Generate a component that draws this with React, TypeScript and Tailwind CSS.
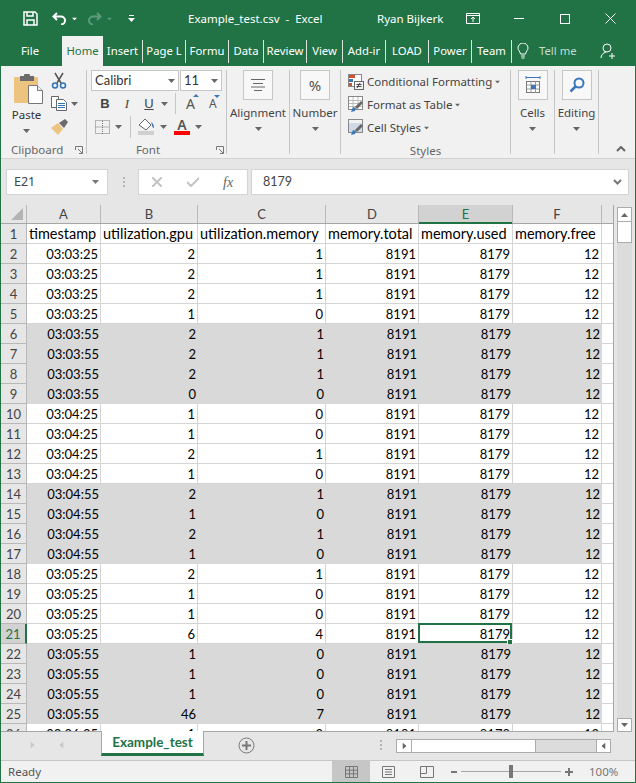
import type { ReactNode } from "react";

const uiFont = "font-['Noto_Sans',sans-serif]";
const cellFont = "font-['Lato',sans-serif]";

const tabs: [string, string][] = [
  ["Insert", "w-[40px]"],
  ["Page L", "w-[43px]"],
  ["Formu", "w-[43px]"],
  ["Data", "w-[35px]"],
  ["Review", "w-[43px]"],
  ["View", "w-[36px]"],
  ["Add-ir", "w-[43px]"],
  ["LOAD", "w-[43px]"],
  ["Power", "w-[43px]"],
  ["Team", "w-[40px]"],
];

// time, gpu, memory, shaded
const rows: [string, string, string, boolean][] = [
  ["03:03:25", "2", "1", false],
  ["03:03:25", "2", "1", false],
  ["03:03:25", "2", "1", false],
  ["03:03:25", "1", "0", false],
  ["03:03:55", "2", "1", true],
  ["03:03:55", "2", "1", true],
  ["03:03:55", "2", "1", true],
  ["03:03:55", "0", "0", true],
  ["03:04:25", "1", "0", false],
  ["03:04:25", "1", "0", false],
  ["03:04:25", "2", "1", false],
  ["03:04:25", "1", "0", false],
  ["03:04:55", "2", "1", true],
  ["03:04:55", "1", "0", true],
  ["03:04:55", "2", "1", true],
  ["03:04:55", "1", "0", true],
  ["03:05:25", "2", "1", false],
  ["03:05:25", "1", "0", false],
  ["03:05:25", "1", "0", false],
  ["03:05:25", "6", "4", false],
  ["03:05:55", "1", "0", true],
  ["03:05:55", "1", "0", true],
  ["03:05:55", "1", "0", true],
  ["03:05:55", "46", "7", true],
  ["03:06:25", "1", "0", false],
];

const widths = ["w-[74px]", "w-[97px]", "w-[128px]", "w-[93px]", "w-[94px]", "w-[89px]"];
const letters = ["A", "B", "C", "D", "E", "F"];
const headings = ["timestamp", "utilization.gpu", "utilization.memory", "memory.total", "memory.used", "memory.free"];

function Caret({ className = "", color = "#666" }: { className?: string; color?: string }) {
  return (
    <svg width="7" height="4" viewBox="0 0 7 4" className={`shrink-0 ${className}`}>
      <path d="M0 0h7L3.500 4z" fill={color} />
    </svg>
  );
}

function Launcher({ className = "" }: { className?: string }) {
  return (
    <svg width="8" height="8" viewBox="0 0 8 8" className={`shrink-0 ${className}`} fill="none" stroke="#777">
      <path d="M.5 4V.5H7.500M7.500.5V7.500H4M3 3l4 4" />
    </svg>
  );
}

function Separator({ className = "" }: { className?: string }) {
  return <span className={`w-px bg-[#c6c6c6] shrink-0 ${className}`} />;
}

function BigGroup({ label, width, children }: { label: string; width: string; children: ReactNode }) {
  return (
    <div className={`${width} flex shrink-0 items-stretch`}>
      <div className="flex-1 flex flex-col items-center pt-[4px]">
        <div className="w-[30px] h-[30px] border border-[#c6c6c6] bg-[#f8f8f8] flex items-center justify-center">
          {children}
        </div>
        <span className="mt-[4px] text-[11.500px] leading-[18px] text-[#444]">{label}</span>
        <Caret className="mt-[5px]" />
      </div>
      <Separator className="my-[4px]" />
    </div>
  );
}

function StyleRow({ icon, label, caret = true }: { icon: ReactNode; label: string; caret?: boolean }) {
  return (
    <div className="h-[23px] shrink-0 flex items-center">
      {icon}
      <span className="ml-[3px] text-[11.500px] text-[#444] whitespace-nowrap">{label}</span>
      {caret && <Caret className="ml-[2px] scale-75" />}
    </div>
  );
}

function TableIcon({ shaded }: { shaded: boolean }) {
  return (
    <svg width="16" height="17" viewBox="0 0 16 17" className="shrink-0">
      <rect x=".5" y=".5" width="14" height="13" fill={shaded ? "#cfd9e8" : "#fff"} stroke="#888" />
      {!shaded && <path d="M1 4.500h13M1 7.500h13M1 10.500h13M5 1v12M10 1v12" stroke="#bbb" />}
      {shaded && <path d="M1 1h13v3H1z" fill="#f2f2f2" />}
      <path d="M3 16l2-5 3 1-1 3z" fill="#3a76b8" />
      <path d="M7 11l6-6 2 2-6 6z" fill="#666" />
    </svg>
  );
}

function Ribbon() {
  return (
    <div className="h-[93px] shrink-0 bg-[#f1f1f1] border-b border-[#d2d2d2] flex">
      {/* clipboard */}
      <div className="w-[86px] shrink-0 flex">
        <div className="flex-1 flex flex-col">
          <div className="flex h-[76px] shrink-0">
            <div className="w-[50px] flex flex-col items-center pt-[8px] pl-[1px]">
              <svg width="30" height="30" viewBox="0 0 30 30" className="ml-[4px] shrink-0">
                <rect x="0" y="3" width="24" height="26" rx="1" fill="#edc47f" />
                <path d="M6 2h4a3 3 0 016 0h4v5H6z" fill="#6b6b6b" />
                <path d="M14.500 11.500h9l5 5v13h-14z" fill="#fff" stroke="#777" />
                <path d="M23.500 11.500v5h5" fill="#eee" stroke="#777" />
              </svg>
              <span className="mt-[3px] text-[11.500px] leading-[16px] text-[#333]">Paste</span>
              <Caret className="mt-[6px]" />
            </div>
            <div className="flex flex-col pt-[6px]">
              <svg width="16" height="17" viewBox="0 0 16 17" fill="none">
                <path d="M4 1l6 10M12 1L6 11" stroke="#555" strokeWidth="1.500" />
                <circle cx="4" cy="13.500" r="2.500" stroke="#2f72b5" strokeWidth="1.500" />
                <circle cx="12" cy="13.500" r="2.500" stroke="#2f72b5" strokeWidth="1.500" />
              </svg>
              <div className="flex items-center mt-[7px]">
                <svg width="16" height="15" viewBox="0 0 16 15" fill="none" stroke="#666">
                  <path d="M.5.500h7v11h-7z" fill="#fff" />
                  <path d="M5.500 3.500h7l3 3v8h-10z" fill="#fff" />
                  <path d="M7 7.500h7M7 9.500h7M7 11.500h7" stroke="#2f72b5" />
                </svg>
                <Caret className="ml-[4px]" />
              </div>
              <svg width="17" height="16" viewBox="0 0 17 16" className="mt-[8px]">
                <path d="M0 9l7-5 5 6-5 6z" fill="#edc47f" />
                <path d="M8 4l6-4 3 3-4 6z" fill="#6b6b6b" />
              </svg>
            </div>
          </div>
          <div className="flex items-center pl-[10px] h-[16px] shrink-0">
            <span className="w-[54px] text-[11.500px] text-[#666]">Clipboard</span>
            <Launcher className="ml-[10px]" />
          </div>
        </div>
        <Separator className="my-[4px]" />
      </div>

      {/* font */}
      <div className="w-[140px] shrink-0 flex">
        <div className="flex-1 flex flex-col pl-[4px] pt-[4px]">
          <div className="flex gap-[1px] shrink-0">
            <div className={`w-[88px] h-[21px] border border-[#c6c6c6] bg-white flex items-center justify-between px-[3px] ${cellFont}`}>
              <span className="text-[13px] text-[#333]">Calibri</span>
              <Caret />
            </div>
            <div className={`w-[42px] h-[21px] border border-[#c6c6c6] bg-white flex items-center justify-between px-[3px] ${cellFont}`}>
              <span className="text-[13px] text-[#333]">11</span>
              <Caret />
            </div>
          </div>
          <div className="flex items-center h-[23px] mt-[1px] shrink-0">
            <span className="w-[14px] ml-[7px] text-center text-[13px] font-bold text-[#444] font-['Liberation_Sans',sans-serif]">B</span>
            <span className="w-[14px] ml-[8px] text-center text-[13px] italic text-[#444] font-['Liberation_Serif',serif]">I</span>
            <span className="w-[14px] ml-[8px] text-center text-[13px] underline text-[#444] font-['Liberation_Sans',sans-serif]">U</span>
            <Caret className="ml-[5px]" />
            <Separator className="h-[21px] ml-[7px]" />
            <span className="relative ml-[10px] text-[14px] text-[#555]">
              A
              <span className="absolute -right-[4px] top-[1px] w-0 h-0 border-x-[3px] border-x-transparent border-b-[3px] border-b-[#3a76b8]" />
            </span>
            <span className="relative ml-[14px] text-[12px] text-[#555]">
              A
              <span className="absolute -right-[3px] top-[0px] w-0 h-0 border-x-[3px] border-x-transparent border-t-[3px] border-t-[#3a76b8]" />
            </span>
          </div>
          <div className="flex items-center h-[23px] shrink-0">
            <svg width="15" height="14" viewBox="0 0 15 14" className="ml-[4px]" fill="none" stroke="#777" strokeDasharray="1 1">
              <path d="M.5.500h14v13H.500zM.5 7h14M7.500 1v13" />
            </svg>
            <Caret className="ml-[5px]" />
            <Separator className="h-[22px] ml-[8px]" />
            <svg width="17" height="17" viewBox="0 0 17 17" className="ml-[7px]">
              <path d="M1 7l6-6 6 6-5 5z" fill="#fff" stroke="#666" />
              <path d="M13 4c2 1 3 3 3 6-1 0-2-1-2-3z" fill="#3a76b8" />
              <rect x="0" y="13" width="16" height="4" fill="#d0d0d0" />
            </svg>
            <Caret className="ml-[5px]" />
            <span className="relative ml-[7px] w-[16px] h-[17px] text-center text-[14px] leading-[14px] font-semibold text-[#555]">
              A
              <span className="absolute left-0 bottom-0 w-[16px] h-[4px] bg-[#f00]" />
            </span>
            <Caret className="ml-[5px]" />
          </div>
          <div className="flex items-center h-[16px] mt-[4px] shrink-0">
            <span className="ml-[42px] w-[30px] text-center text-[11.500px] text-[#666]">Font</span>
            <Launcher className="ml-[53px]" />
          </div>
        </div>
        <Separator className="my-[4px]" />
      </div>

      <BigGroup label="Alignment" width="w-[63px]">
        <svg width="14" height="12" viewBox="0 0 14 12" stroke="#666">
          <path d="M0 .5h14M2 4.500h10M0 8h14M3 11.500h8" />
        </svg>
      </BigGroup>
      <BigGroup label="Number" width="w-[51px]">
        <span className="text-[15px] text-[#555]">%</span>
      </BigGroup>

      {/* styles */}
      <div className="w-[170px] shrink-0 flex">
        <div className="flex-1 flex flex-col pl-[7px] pt-[4px]">
          <StyleRow
            label="Conditional Formatting"
            icon={
              <svg width="16" height="16" viewBox="0 0 16 16" className="shrink-0">
                <rect x=".5" y=".5" width="13" height="12" fill="#fff" stroke="#888" />
                <rect x="1" y="1" width="6" height="3" fill="#d2502f" />
                <rect x="1" y="5" width="4" height="3" fill="#3a76b8" />
                <rect x="1" y="9" width="3" height="3" fill="#d2502f" />
                <rect x="6.500" y="7.500" width="9" height="8" fill="#f4f4f4" stroke="#666" />
                <path d="M8.500 10.500h5M8.500 12.500h5M12 9l-3 5" stroke="#444" fill="none" />
              </svg>
            }
          />
          <StyleRow label="Format as Table" icon={<TableIcon shaded={false} />} />
          <StyleRow label="Cell Styles" icon={<TableIcon shaded />} />
          <div className="mt-[3px] h-[16px] shrink-0 flex justify-center pr-[7px]">
            <span className="text-[11.500px] text-[#666]">Styles</span>
          </div>
        </div>
        <Separator className="my-[4px]" />
      </div>

      <BigGroup label="Cells" width="w-[44px]">
        <svg width="16" height="18" viewBox="0 0 16 18" fill="none">
          <path d="M1 1.500h14M1 0v3M15 0v3" stroke="#3a76b8" />
          <rect x="1.500" y="5.500" width="13" height="11" fill="#fff" stroke="#777" />
          <path d="M1.500 9h13M1.500 13h13M6 5.500v11M10.500 5.500v11" stroke="#999" />
          <rect x="6" y="9" width="5" height="4" fill="#3a76b8" />
        </svg>
      </BigGroup>
      <BigGroup label="Editing" width="w-[44px]">
        <svg width="16" height="16" viewBox="0 0 16 16" fill="none" stroke="#3a76b8">
          <circle cx="10" cy="6" r="4.500" strokeWidth="2" />
          <path d="M6.500 9.500L1.500 14.500" strokeWidth="2.500" />
        </svg>
      </BigGroup>

      <div className="flex-1 relative">
        <svg width="10" height="6" viewBox="0 0 10 6" className="absolute right-[9px] bottom-[6px]" fill="none" stroke="#666" strokeWidth="2">
          <path d="M1 5l4-4 4 4" />
        </svg>
      </div>
    </div>
  );
}

function Sheet() {
  return (
    <div className={`flex-1 min-h-0 flex ${cellFont}`}>
      <div className="w-[613px] shrink-0 flex flex-col overflow-hidden border-r border-[#a6a6a6] border-b">
        {/* column letters */}
        <div className="h-[19px] shrink-0 flex border-b border-[#a6a6a6] text-[13px] text-[#444]">
          <div className="w-[26px] shrink-0 relative border-r border-[#b8b8b8]">
            <span className="absolute right-[3px] bottom-[3px] w-0 h-0 border-l-[12px] border-l-transparent border-b-[12px] border-b-[#b4b4b4]" />
          </div>
          {letters.map((l, i) => (
            <div
              key={l}
              className={`${widths[i]} shrink-0 flex items-center justify-center pt-[1px] border-r border-[#b8b8b8] ${
                l === "E" ? "bg-[#d2d2d2] text-[#217346] relative" : ""
              }`}
            >
              {l}
              {l === "E" && <span className="absolute left-0 right-0 -bottom-[1px] h-[2px] bg-[#217346]" />}
            </div>
          ))}
          <div className="flex-1" />
        </div>

        {/* heading row */}
        <div className="h-[20px] shrink-0 flex">
          <div className="w-[26px] shrink-0 flex items-center justify-center pt-[2px] border-r border-b border-[#b8b8b8] text-[13px] text-[#444]">
            1
          </div>
          {headings.map((h, i) => (
            <div
              key={h}
              className={`${widths[i]} shrink-0 flex items-center pl-[2px] pt-[1px] bg-white border-r border-b border-[#d4d4d4] text-[14.500px] text-black whitespace-nowrap overflow-hidden`}
            >
              {h}
            </div>
          ))}
          <div className="flex-1 bg-white border-b border-[#d4d4d4]" />
        </div>

        {rows.map((r, idx) => {
          const num = idx + 2;
          const vals = [r[0], r[1], r[2], "8191", "8179", "12"];
          const cell = r[3] ? "bg-[#d9d9d9]" : "bg-white border-r border-b border-[#d4d4d4]";
          return (
            <div key={num} className="h-[20px] shrink-0 flex">
              <div
                className={`w-[26px] shrink-0 flex items-center justify-center pt-[2px] border-r border-b border-[#b8b8b8] text-[13px] ${
                  num === 21 ? "bg-[#d2d2d2] text-[#217346] border-r-2 border-r-[#217346]" : "text-[#444]"
                }`}
              >
                {num}
              </div>
              {vals.map((v, i) => (
                <div
                  key={i}
                  className={`${widths[i]} shrink-0 relative flex items-center justify-end pr-[2px] pt-[2px] text-[13px] text-black ${cell}`}
                >
                  {v}
                  {num === 21 && i === 4 && (
                    <>
                      <span className="absolute -left-[1px] -top-[1px] right-[0px] bottom-[0px] border-2 border-[#217346]" />
                      <span className="absolute -right-[1px] -bottom-[2px] w-[6px] h-[6px] bg-[#217346] border border-white" />
                    </>
                  )}
                </div>
              ))}
              <div className="flex-1 bg-white border-b border-[#d4d4d4]" />
            </div>
          );
        })}
      </div>

      {/* vertical scroll bar */}
      <div className="ml-[3px] w-[15px] shrink-0 flex flex-col pt-[2px] bg-[#e6e6e6]">
        <div className="h-[15px] bg-white border border-[#ababab] flex items-center justify-center">
          <Caret className="rotate-180" />
        </div>
        <div className="h-[21px] bg-white border-x border-b border-[#ababab]" />
        <div className="flex-1 bg-[#dcdcdc]" />
        <div className="h-[14px] bg-white border border-[#ababab] flex items-center justify-center">
          <Caret />
        </div>
      </div>
    </div>
  );
}

export default function App() {
  return (
    <div className={`w-[636px] h-[783px] flex flex-col overflow-hidden border border-[#217346] bg-[#e6e6e6] ${uiFont}`}>
      {/* title bar */}
      <div className="h-[35px] shrink-0 bg-[#217346] flex items-center text-white text-[11.500px]">
        <svg width="15" height="15" viewBox="0 0 15 15" className="ml-[22px]" fill="none" stroke="#fff" strokeWidth="1.500">
          <path d="M1 1h11l2 2v11H1z" />
          <path d="M4 1v4h6V1M4 14V9h7v5" />
        </svg>
        <svg width="15" height="13" viewBox="0 0 15 13" className="ml-[14px]" fill="none" stroke="#fff" strokeWidth="2">
          <path d="M5 1L1.500 4.500 5 8M2 4.500h7a4 4 0 010 8" />
        </svg>
        <Caret className="ml-[4px] scale-75" color="#fff" />
        <svg width="15" height="13" viewBox="0 0 15 13" className="ml-[9px]" fill="none" stroke="#5c9a7b" strokeWidth="2">
          <path d="M10 1l3.500 3.500L10 8M13 4.500H6a4 4 0 000 8" />
        </svg>
        <Caret className="ml-[4px] scale-75" color="#5c9a7b" />
        <svg width="7" height="7" viewBox="0 0 7 7" className="ml-[15px]" fill="#fff">
          <path d="M1 0h5v1H1zM0 3h7L3.500 7z" />
        </svg>
        <span className="ml-[53px] w-[135px] shrink-0 whitespace-pre">Example_test.csv  -  Excel</span>
        <span className="ml-[54px] w-[67px] shrink-0 whitespace-nowrap">Ryan Bijkerk</span>
        <svg width="14" height="11" viewBox="0 0 14 11" className="ml-[22px] shrink-0" fill="none" stroke="#fff">
          <path d="M.5.500h13v10H.500zM1 2.500h12M7 9V4M5 6l2-2 2 2" />
        </svg>
        <span className="ml-[34px] w-[10px] h-px bg-white shrink-0" />
        <span className="ml-[36px] w-[10px] h-[10px] border border-white shrink-0" />
        <svg width="11" height="11" viewBox="0 0 11 11" className="ml-[35px] shrink-0" stroke="#fff">
          <path d="M.5.500l10 10M10.500.500l-10 10" />
        </svg>
      </div>

      {/* ribbon tabs */}
      <div className="h-[30px] shrink-0 bg-[#217346] flex items-center text-[11.300px] text-white">
        <div className="w-[58px] pl-[20px]">File</div>
        <div className="w-[3px]" />
        <div className="w-[41px] h-[30px] bg-[#f1f1f1] text-[#217346] flex items-center justify-center">Home</div>
        {tabs.map(([label, w]) => (
          <div key={label} className={`${w} shrink-0 flex items-center`}>
            <span className="flex-1 text-center whitespace-nowrap overflow-hidden">{label}</span>
            <span className="w-px h-[23px] bg-[#d8e6de]" />
          </div>
        ))}
        <svg width="12" height="16" viewBox="0 0 12 16" className="ml-[5px] shrink-0" fill="none" stroke="#fff">
          <path d="M3.500 11C3 8 1 7.500 1 5a5 5 0 0110 0c0 2.500-2 3-2.500 6zM4 13h4M4.500 15h3" />
        </svg>
        <span className="ml-[10px] w-[39px] shrink-0 whitespace-nowrap text-[#c4dbce]">Tell me</span>
        <svg width="16" height="17" viewBox="0 0 16 17" className="ml-[22px] shrink-0" fill="none" stroke="#fff">
          <circle cx="7" cy="5" r="4" />
          <path d="M1 15c0-3 2-5 5-6M12 10v6M9 13h6" />
        </svg>
      </div>

      <Ribbon />

      {/* formula bar */}
      <div className="mt-[10px] h-[26px] shrink-0 flex text-[12.500px] text-[#444]">
        <div className="ml-[5px] w-[102px] bg-white border border-[#d4d4d4] flex items-center justify-between pl-[7px] pr-[8px]">
          <span>E21</span>
          <Caret color="#777" />
        </div>
        <div className="ml-[15px] w-[3px] flex flex-col justify-center gap-[2px]">
          <span className="h-[2px] w-[2px] bg-[#b4b4b4]" />
          <span className="h-[2px] w-[2px] bg-[#b4b4b4]" />
          <span className="h-[2px] w-[2px] bg-[#b4b4b4]" />
        </div>
        <div className="ml-[12px] w-[110px] bg-white border border-[#d4d4d4] flex items-center text-[#666]">
          <svg width="10" height="10" viewBox="0 0 10 10" className="ml-[13px]" stroke="#c4c4c4" strokeWidth="2">
            <path d="M0 0l10 10M10 0L0 10" />
          </svg>
          <svg width="12" height="10" viewBox="0 0 12 10" className="ml-[25px]" fill="none" stroke="#c4c4c4" strokeWidth="2">
            <path d="M0 5l4 4 8-8" />
          </svg>
          <span className="ml-[24px] text-[14px] italic font-['Liberation_Serif',serif]">fx</span>
        </div>
        <div className="ml-[3px] w-[378px] bg-white border border-[#d4d4d4] flex items-center justify-between pl-[11px] pr-[6px]">
          <span className={cellFont}>8179</span>
          <svg width="9" height="6" viewBox="0 0 9 6" fill="none" stroke="#777" strokeWidth="2">
            <path d="M1 1l3.500 3.500L8 1" />
          </svg>
        </div>
      </div>

      <div className="mt-[10px] flex-1 min-h-0 flex flex-col">
        <Sheet />

        {/* sheet tabs */}
        <div className="h-[28px] shrink-0 flex items-start">
          <Caret className="ml-[28px] mt-[11px] -rotate-90" color="#c6c6c6" />
          <Caret className="ml-[22px] mt-[11px] rotate-90" color="#c6c6c6" />
          <div className={`ml-[36px] w-[103px] h-[25px] -mt-px pt-[1px] bg-white border-x border-[#a6a6a6] border-b-[3px] border-b-[#217346] flex items-center justify-center text-[13.500px] font-bold text-[#217346] ${cellFont}`}>
            Example_test
          </div>
          <svg width="17" height="17" viewBox="0 0 17 17" className="ml-[34px] mt-[5px]" fill="none" stroke="#777">
            <circle cx="8.500" cy="8.500" r="7.500" />
            <path d="M8.500 4v9M4 8.500h9" strokeWidth="2" />
          </svg>
          <div className="ml-[125px] mt-[8px] flex flex-col gap-[2px]">
            <span className="h-[2px] w-[2px] bg-[#b4b4b4]" />
            <span className="h-[2px] w-[2px] bg-[#b4b4b4]" />
            <span className="h-[2px] w-[2px] bg-[#b4b4b4]" />
          </div>
          <div className="ml-[14px] mt-[7px] w-[215px] h-[14px] flex bg-[#dcdcdc] border border-[#ababab]">
            <div className="w-[14px] bg-white flex items-center justify-center">
              <Caret className="-rotate-90" />
            </div>
            <div className="w-[125px] bg-white border-x border-[#ababab]" />
            <div className="flex-1" />
            <div className="w-[14px] bg-white border-l border-[#ababab] flex items-center justify-center">
              <Caret className="rotate-90" />
            </div>
          </div>
        </div>

        {/* status bar */}
        <div className="h-[22px] shrink-0 bg-[#f1f1f1] border-t border-[#c6c6c6] flex items-center text-[11.500px] text-[#555]">
          <span className="ml-[7px] w-[33px] shrink-0">Ready</span>
          <div className="ml-[291px] w-[38px] h-[21px] bg-[#c6c6c6] flex items-center justify-center shrink-0">
            <svg width="13" height="12" viewBox="0 0 13 12" fill="none" stroke="#777">
              <path d="M.5.500h12v11H.500zM.5 4.200h12M.5 7.800h12M4.500 1v11M8.500 1v11" />
            </svg>
          </div>
          <svg width="13" height="12" viewBox="0 0 13 12" className="ml-[12px] shrink-0" fill="none" stroke="#777">
            <path d="M.5.500h12v11H.500zM3 3.500h7M3 6h7M3 8.500h7" />
          </svg>
          <svg width="14" height="12" viewBox="0 0 14 12" className="ml-[25px] shrink-0" fill="none" stroke="#777">
            <path d="M.5.500h13v11H.500zM.5 7.500h6V.500" />
          </svg>
          <span className="ml-[17px] w-[6px] h-[2px] bg-[#777] shrink-0" />
          <div className="ml-[4px] relative w-[100px] h-px bg-[#a6a6a6] shrink-0">
            <span className="absolute left-[48px] -top-[6px] w-[4px] h-[13px] bg-[#777]" />
          </div>
          <span className="ml-[4px] relative w-[8px] h-[2px] bg-[#777] shrink-0">
            <span className="absolute left-[3px] -top-[3px] w-[2px] h-[8px] bg-[#777]" />
          </span>
          <span className="ml-[16px] text-[#777] whitespace-nowrap">100%</span>
        </div>
      </div>
    </div>
  );
}
